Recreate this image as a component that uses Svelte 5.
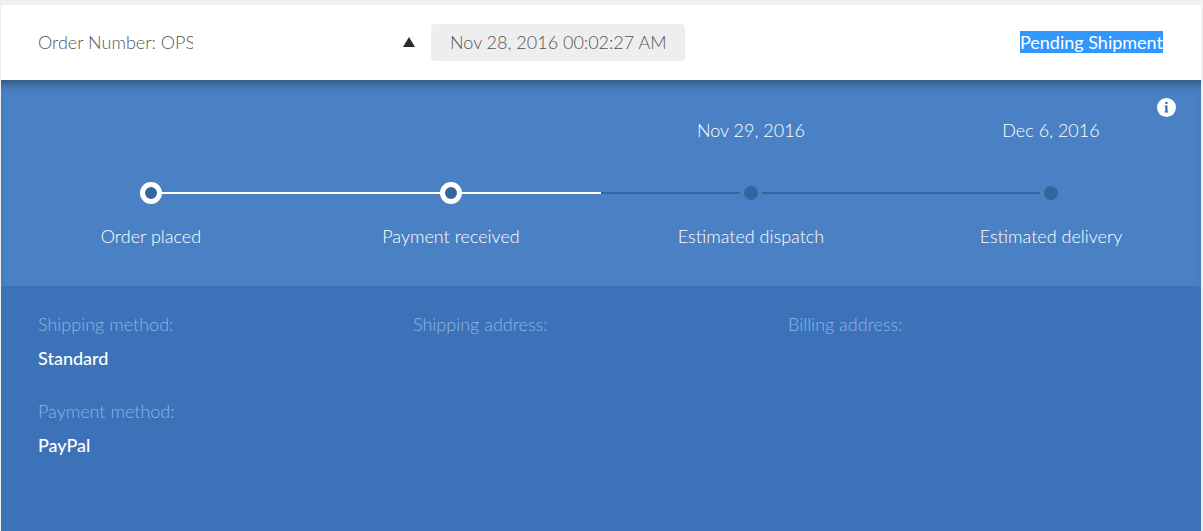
<script>
  const steps = [
    { label: 'Order placed', date: '', done: true },
    { label: 'Payment received', date: '', done: true },
    { label: 'Estimated dispatch', date: 'Nov 29, 2016', done: false },
    { label: 'Estimated delivery', date: 'Dec 6, 2016', done: false }
  ];
  const details = [
    [
      { term: 'Shipping method:', value: 'Standard' },
      { term: 'Payment method:', value: 'PayPal' }
    ],
    [{ term: 'Shipping address:', value: '' }],
    [{ term: 'Billing address:', value: '' }]
  ];
</script>

<main class="order">
  <header class="summary">
    <div class="number"><span class="clip">Order Number: OPS</span></div>
    <div class="placed">
      <button class="toggle" aria-label="Collapse order">
        <svg width="12" height="10" viewBox="0 0 12 10"><path d="M6 0 L12 10 H0 Z" fill="#2b2b2b" /></svg>
      </button>
      <time class="date">Nov 28, 2016 00:02:27 AM</time>
    </div>
    <div class="status"><mark>Pending Shipment</mark></div>
  </header>

  <section class="progress">
    <button class="info" aria-label="More information">
      <svg width="19" height="19" viewBox="0 0 19 19">
        <circle cx="9.5" cy="9.5" r="9.5" fill="#fff" />
        <path d="M8.3 4 H10.5 V6 H8.3 Z M7.5 7.5 H10.5 V13.5 H11.3 V14.5 H7.5 V13.5 H8.3 V8.5 H7.5 Z" fill="#3a6aa6" />
      </svg>
    </button>
    <ol class="steps">
      {#each steps as step, i}
        <li class="step" class:done={step.done}>
          <span class="when">{step.date}</span>
          <span class="track">
            <span class="line" class:hidden={i === 0}></span>
            <span class="dot"></span>
            <span class="line" class:hidden={i === steps.length - 1}></span>
          </span>
          <span class="label">{step.label}</span>
        </li>
      {/each}
    </ol>
  </section>

  <section class="details">
    {#each details as column}
      <dl>
        {#each column as item}
          <dt>{item.term}</dt>
          <dd>{item.value}</dd>
        {/each}
      </dl>
    {/each}
  </section>
</main>

<style>
  :global(body) {
    background: #f0f0f0;
  }
  .order {
    display: flex;
    flex-direction: column;
    box-sizing: border-box;
    min-height: 100vh;
    padding: 5px 2px 0 1px;
    font: 300 18px/22px Lato, sans-serif;
    color: #fff;
  }
  button {
    display: block;
    padding: 0;
    border: 0;
    background: none;
    cursor: pointer;
  }
  svg {
    display: block;
  }
  .summary {
    display: grid;
    grid-template-columns: 365px 1fr auto;
    align-items: center;
    height: 75px;
    padding: 0 38px 0 37px;
    background: #fff;
    color: #555;
  }
  .number,
  .toggle,
  .status {
    padding-bottom: 2px;
  }
  .clip {
    display: block;
    width: 155px;
    overflow: hidden;
    white-space: nowrap;
  }
  .placed {
    display: flex;
    align-items: center;
    gap: 16px;
  }
  .date {
    padding: 7px 18px 8px 19px;
    border-radius: 4px;
    background: #eee;
  }
  mark {
    display: block;
    background: #3297fd;
    color: #fff;
    font-weight: 400;
  }
  .progress {
    position: relative;
    height: 206px;
    background: #4a81c5;
    box-shadow: inset 0 10px 10px -6px rgba(40, 60, 80, 0.65);
  }
  .info {
    position: absolute;
    top: 18px;
    right: 25px;
  }
  .steps {
    display: grid;
    grid-template-columns: repeat(4, 1fr);
    margin: 0;
    padding: 39px 0 0;
    list-style: none;
  }
  .step {
    display: flex;
    flex-direction: column;
    text-align: center;
  }
  .when {
    height: 22px;
  }
  .track {
    display: flex;
    align-items: center;
    margin: 41px 0 21px;
  }
  .line {
    flex: 1;
    height: 2px;
    background: #34659f;
  }
  .done .line {
    background: #fff;
  }
  .line.hidden {
    visibility: hidden;
  }
  .dot {
    box-sizing: border-box;
    width: 22px;
    height: 22px;
    border: 4px solid transparent;
    border-radius: 50%;
    background: #34659f;
    background-clip: padding-box;
  }
  .done .dot {
    border: 5px solid #fff;
  }
  .details {
    display: grid;
    grid-template-columns: repeat(3, 1fr);
    flex: 1;
    padding: 27px 38px 0 37px;
    background: #3c72b8;
  }
  dl {
    margin: 0;
  }
  dt {
    color: #8db4e8;
  }
  dd {
    margin: 12px 0 31px;
    font-weight: 500;
  }
</style>
